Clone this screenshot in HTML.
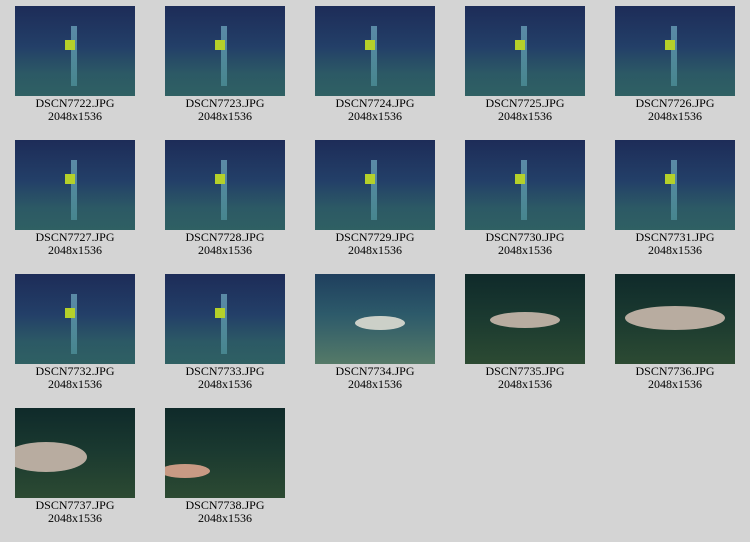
<!DOCTYPE html>
<html><head><style>
body{margin:0;background:#d4d4d4;width:750px;height:542px;overflow:hidden;font-family:"Liberation Serif",serif;font-size:12px;color:#000}
.c{position:absolute;width:150px;text-align:center;line-height:13px}
.t{width:120px;height:90px;margin:6px auto 0;position:relative;overflow:hidden}
.b{background:linear-gradient(#1d2c58 0%,#233f68 45%,#2c5965 75%,#2f6063 100%)}
.p:before{content:"";position:absolute;left:56px;top:20px;width:6px;height:60px;background:linear-gradient(#6aa0b8,#4d8f99);opacity:.8}
.p:after{content:"";position:absolute;left:50px;top:34px;width:10px;height:10px;background:#b5d02a}
.s{background:linear-gradient(#1f3f5e 0%,#2d5a6a 45%,#557a68 100%)}
.g{background:linear-gradient(#0f2a2a 0%,#1b3a30 50%,#2c4a32 100%)}
.f{position:absolute;background:#b8aca0;border-radius:50%}
.cap{margin-top:1px}
</style></head><body>
<div class="c" style="left:0;top:0"><div class="t b p"></div><div class="cap">DSCN7722.JPG<br>2048x1536</div></div>
<div class="c" style="left:150px;top:0"><div class="t b p"></div><div class="cap">DSCN7723.JPG<br>2048x1536</div></div>
<div class="c" style="left:300px;top:0"><div class="t b p"></div><div class="cap">DSCN7724.JPG<br>2048x1536</div></div>
<div class="c" style="left:450px;top:0"><div class="t b p"></div><div class="cap">DSCN7725.JPG<br>2048x1536</div></div>
<div class="c" style="left:600px;top:0"><div class="t b p"></div><div class="cap">DSCN7726.JPG<br>2048x1536</div></div>
<div class="c" style="left:0;top:134px"><div class="t b p"></div><div class="cap">DSCN7727.JPG<br>2048x1536</div></div>
<div class="c" style="left:150px;top:134px"><div class="t b p"></div><div class="cap">DSCN7728.JPG<br>2048x1536</div></div>
<div class="c" style="left:300px;top:134px"><div class="t b p"></div><div class="cap">DSCN7729.JPG<br>2048x1536</div></div>
<div class="c" style="left:450px;top:134px"><div class="t b p"></div><div class="cap">DSCN7730.JPG<br>2048x1536</div></div>
<div class="c" style="left:600px;top:134px"><div class="t b p"></div><div class="cap">DSCN7731.JPG<br>2048x1536</div></div>
<div class="c" style="left:0;top:268px"><div class="t b p"></div><div class="cap">DSCN7732.JPG<br>2048x1536</div></div>
<div class="c" style="left:150px;top:268px"><div class="t b p"></div><div class="cap">DSCN7733.JPG<br>2048x1536</div></div>
<div class="c" style="left:300px;top:268px"><div class="t s"><div class="f" style="left:40px;top:42px;width:50px;height:14px;background:#ccd0c8"></div></div><div class="cap">DSCN7734.JPG<br>2048x1536</div></div>
<div class="c" style="left:450px;top:268px"><div class="t g"><div class="f" style="left:25px;top:38px;width:70px;height:16px"></div></div><div class="cap">DSCN7735.JPG<br>2048x1536</div></div>
<div class="c" style="left:600px;top:268px"><div class="t g"><div class="f" style="left:10px;top:32px;width:100px;height:24px"></div></div><div class="cap">DSCN7736.JPG<br>2048x1536</div></div>
<div class="c" style="left:0;top:402px"><div class="t g"><div class="f" style="left:-10px;top:34px;width:82px;height:30px"></div></div><div class="cap">DSCN7737.JPG<br>2048x1536</div></div>
<div class="c" style="left:150px;top:402px"><div class="t g"><div class="f" style="left:-5px;top:56px;width:50px;height:14px;background:#c89a84"></div></div><div class="cap">DSCN7738.JPG<br>2048x1536</div></div>
</body></html>
